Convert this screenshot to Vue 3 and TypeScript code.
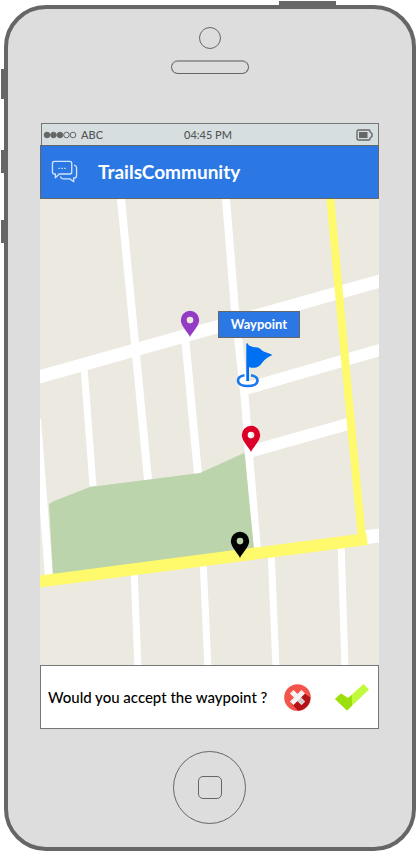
<script setup lang="ts">
interface Road {
  d: string
  width: number
}

interface Pin {
  name: string
  x: number
  y: number
  color: string
}

const streets: Road[] = [
  { d: 'M-3 220 L9 378', width: 8 },
  { d: 'M81 0 L96 155 L108 281', width: 8 },
  { d: 'M44 168 L53 287', width: 7 },
  { d: 'M145 138 L158 275', width: 8 },
  { d: 'M186 0 L195 111 L205 201 L209 255 L217 352', width: 8 },
  { d: 'M-4 179 L343 81', width: 13 },
  { d: 'M205 190 L343 150', width: 12 },
  { d: 'M209 253 L308 225', width: 12 },
  { d: 'M320 339 L343 336', width: 14 },
  { d: 'M94 370 L98 470', width: 7 },
  { d: 'M163 360 L168 470', width: 7 },
  { d: 'M231 350 L236 470', width: 7 },
  { d: 'M301 342 L305 470', width: 7 },
]

const avenues: Road[] = [
  { d: 'M290 -4 L312 236 L322 340', width: 8 },
  { d: 'M-4 383 L327 340', width: 12 },
]

const pins: Pin[] = [
  { name: 'Purple pin', x: 150, y: 138, color: '#933bc5' },
  { name: 'Red pin', x: 211, y: 253, color: '#dc0028' },
  { name: 'Black pin', x: 200, y: 359, color: '#000' },
]

const signal = [true, true, true, false, false]
</script>

<template>
  <div class="device">
    <i class="side-key power"></i>
    <i class="side-key mute"></i>
    <i class="side-key volume-up"></i>
    <i class="side-key volume-down"></i>

    <div class="camera"></div>
    <div class="speaker"></div>

    <main class="screen">
      <div class="status">
        <span class="carrier">
          <svg class="signal" viewBox="0 0 34 8" aria-hidden="true">
            <circle
              v-for="(on, i) in signal"
              :key="i"
              :cx="4 + i * 6.5"
              cy="4"
              r="2.8"
              :fill="on ? '#666' : 'none'"
              stroke="#666"
            />
          </svg>
          ABC
        </span>
        <span>04:45 PM</span>
        <svg class="battery" viewBox="0 0 17 12" aria-hidden="true">
          <path d="M2.500 1H13Q14 1 14 2V3L16 4.500V7.500L14 9V10Q14 11 13 11H2.500Q1 11 1 9.500V2.500Q1 1 2.500 1Z" fill="none" stroke="#666" stroke-width="1.400" />
          <rect x="3" y="3" width="8.500" height="6" fill="#666" />
        </svg>
      </div>

      <header class="bar">
        <button class="chat" type="button" aria-label="Messages">
          <svg viewBox="0 0 28 24" fill="none" stroke="#d3e3fb" stroke-width="1.400" stroke-linejoin="round" stroke-linecap="round">
            <path d="M3.500 1.500H19.500Q21.500 1.500 21.500 3.500V12.500Q21.500 14.500 19.500 14.500H8.500L4.500 18.500V14.500H3.500Q1.500 14.500 1.500 12.500V3.500Q1.500 1.500 3.500 1.500Z" />
            <path d="M24.500 5.500Q26.500 6 26.500 8V16Q26.500 18.500 24.500 18.500H23.500V22.500L19.500 19.500H12.500Q10.500 19.500 10 17.500" />
            <path d="M8 8.500h1M11 8.500h1M14 8.500h1" stroke-width="1.100" />
          </svg>
        </button>
        <h1>TrailsCommunity</h1>
      </header>

      <section class="map" aria-label="Map">
        <svg class="map-art" viewBox="0 0 339 466">
          <rect width="339" height="466" fill="#ece9e1" />
          <g fill="none" stroke="#fff">
            <path v-for="road in streets" :key="road.d" :d="road.d" :stroke-width="road.width" />
          </g>
          <path d="M9 305L14 302L50 288L160 274L204 254L205 258L214 350L13 377Z" fill="#bbd4ab" />
          <g fill="none" stroke="#fff96c">
            <path v-for="road in avenues" :key="road.d" :d="road.d" :stroke-width="road.width" />
          </g>
          <g v-for="pin in pins" :key="pin.name" :transform="`translate(${pin.x} ${pin.y})`">
            <path
              d="M0 0C-1.500-4-9.200-11-9.200-17A9.200 9.200 0 0 1 9.200-17C9.200-11 1.500-4 0 0ZM0-20.200A3.300 3.300 0 0 0 0-13.600A3.300 3.300 0 0 0 0-20.200Z"
              :fill="pin.color"
              fill-rule="evenodd"
            />
          </g>
          <g transform="translate(197 144)">
            <path d="M7.500 32.300C3.500 33 1 35 1 37.500C1 41 5.200 43 10.800 43S20.500 41 20.500 37.500C20.500 35 18 33 14 32.300" fill="none" stroke="#1a78ee" stroke-width="2.600" />
            <path d="M9.300 1.500Q9.300 0 10.200 0L12 2.500C18 5.500 21 3 24.500 7C27 9.500 31 9.500 35.500 12C31 14 28 16 25 20C22 24.500 17 26 12 24V38H9.300Z" fill="#0070f3" />
          </g>
        </svg>
        <span class="label">Waypoint</span>
      </section>

      <section class="prompt">
        <p>Would you accept the waypoint ?</p>
        <button class="reject" type="button" aria-label="Reject">
          <svg viewBox="0 0 27 27">
            <circle cx="13.500" cy="13.500" r="13.300" fill="#f3554c" />
            <path d="M19 8.500L26.300 13.500A13.300 13.300 0 0 1 14 26.800L7.500 19.500Z" fill="#b31217" />
            <path d="M9.500 9.500L17.500 17.500M17.500 9.500L9.500 17.500" fill="none" stroke="#f7f3f3" stroke-width="5" stroke-linecap="square" />
            <path d="M17 13.500L21 17.500L17.500 21L13.500 17Z" fill="#d8cccc" />
          </svg>
        </button>
        <button class="accept" type="button" aria-label="Accept">
          <svg viewBox="0 0 34 27">
            <path d="M0 15L6 9.500L13 14L28.500 0L34 5.500L12 26.500Z" fill="#c1fa3c" />
            <path d="M0 15L6 9.500L13 14L17 11V21.700L12 26.500Z" fill="#9be00c" />
          </svg>
        </button>
      </section>
    </main>

    <button class="home" type="button" aria-label="Home"><i></i></button>
  </div>
</template>

<style>
body {
  background: #fff;
}
</style>

<style scoped>
.device {
  position: relative;
  box-sizing: border-box;
  display: flex;
  flex-direction: column;
  align-items: center;
  margin: 5px 1px 1px 4px;
  padding: 18px 33px 23px 32px;
  border: 4px solid #666;
  border-radius: 42px;
  background: #ddd;
  font-family: Lato, "Open Sans", sans-serif;
}

.side-key {
  position: absolute;
  left: -7px;
  width: 4px;
  height: 23px;
  background: #666;
}

.side-key.power {
  top: -8px;
  left: auto;
  right: 76px;
  width: 57px;
  height: 4px;
}

.side-key.mute {
  top: 60px;
  height: 30px;
}

.side-key.volume-up {
  top: 141px;
}

.side-key.volume-down {
  top: 211px;
}

.camera {
  box-sizing: border-box;
  width: 22px;
  height: 22px;
  border: 1px solid #666;
  border-radius: 50%;
}

.speaker {
  box-sizing: border-box;
  width: 78px;
  height: 14px;
  margin: 11px 0 49px;
  border: 1px solid #666;
  border-top: 2px solid #999;
  border-radius: 7px;
}

.screen {
  align-self: stretch;
}

.status {
  display: grid;
  grid-template-columns: 1fr auto 1fr;
  align-items: center;
  box-sizing: border-box;
  height: 22px;
  margin-left: 1px;
  padding: 0 5px 0 1px;
  border: 1px solid #777;
  border-bottom: 0;
  background: #d6dee0;
  color: #555;
  font-size: 11px;
  font-weight: 500;
}

.carrier {
  display: flex;
  align-items: center;
  gap: 4px;
}

.signal {
  width: 34px;
  height: 8px;
}

.battery {
  justify-self: end;
  width: 17px;
  height: 12px;
}

.bar {
  display: flex;
  align-items: center;
  gap: 20px;
  box-sizing: border-box;
  height: 54px;
  padding: 0 10px;
  border: 1px solid #666;
  background: #2b78e4;
  color: #fff;
}

button {
  display: block;
  flex: none;
  padding: 0;
  border: 0;
  background: none;
  cursor: pointer;
}

button svg,
.map-art {
  display: block;
  width: 100%;
}

.chat {
  width: 27px;
}

h1 {
  margin: 0;
  font-size: 19px;
  font-weight: 700;
  line-height: 24px;
}

.map {
  position: relative;
}

.label {
  position: absolute;
  top: 24%;
  left: 52.5%;
  box-sizing: border-box;
  width: 82px;
  height: 27px;
  border: 1px solid #666;
  background: #2b78e4;
  color: #fff;
  font-size: 13px;
  font-weight: 700;
  line-height: 25px;
  text-align: center;
}

.prompt {
  display: flex;
  align-items: center;
  box-sizing: border-box;
  min-height: 64px;
  padding: 0 9px 0 7px;
  border: 1px solid #777;
  background: #fff;
}

.prompt p {
  flex: 1;
  margin: 0;
  color: #000;
  font-size: 15px;
  font-weight: 500;
  line-height: 20px;
}

.reject {
  width: 27px;
}

.accept {
  width: 34px;
  margin-left: 24px;
}

.home {
  display: grid;
  place-items: center;
  box-sizing: border-box;
  width: 73px;
  height: 73px;
  margin-top: 22px;
  border: 1px solid #666;
  border-radius: 50%;
}

.home i {
  box-sizing: border-box;
  width: 24px;
  height: 23px;
  border: 1px solid #666;
  border-radius: 5px;
}
</style>
